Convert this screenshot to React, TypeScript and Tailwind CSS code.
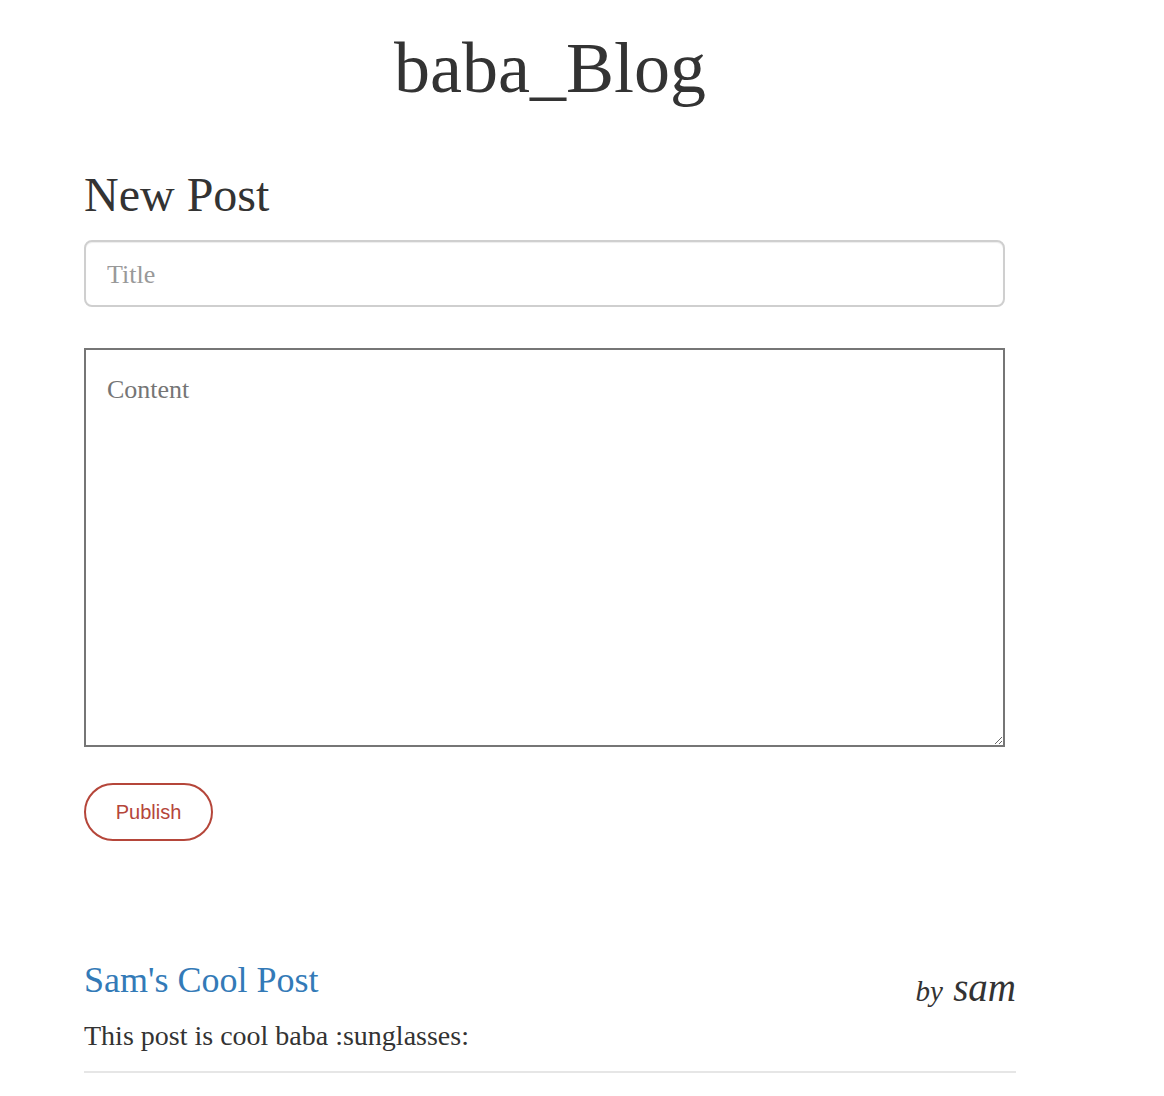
import React from 'react';

const posts = [
  { title: "Sam's Cool Post", author: 'sam', content: 'This post is cool baba :sunglasses:' },
];

export default function App() {
  return (
    <div className="min-h-screen bg-white text-[#333] font-['Liberation_Serif',serif]">
      <div className="ml-[84px] w-[932px] pb-[24px]">
        <h1 className="pt-[32px] text-center text-[72px] leading-none">baba_Blog</h1>

        <h2 className="mt-[67px] text-[48px] leading-none">New Post</h2>

        <form className="mt-[21px] w-[921px]" onSubmit={(e) => e.preventDefault()}>
          <input
            type="text"
            placeholder="Title"
            className="block h-[67px] w-full rounded-[8px] border-2 border-[#cfcfcf] px-[21px] pt-[3px] text-[26px] outline-none placeholder:text-[#999] shadow-[inset_0_1px_1px_rgba(0,0,0,0.075)]"
          />
          <textarea
            placeholder="Content"
            className="mt-[41px] block h-[399px] w-full border-2 border-[#767676] p-[21px] text-[26px] leading-[37px] outline-none placeholder:text-[#757575]"
          />
          <button
            type="submit"
            className="mt-[36px] block h-[58px] w-[129px] rounded-full border-2 border-[#b5463a] bg-white text-[20px] text-[#b5463a] font-['Liberation_Sans',Arial,sans-serif]"
          >
            Publish
          </button>
        </form>

        <div className="mt-[121px]">
          {posts.map((post) => (
            <div key={post.title}>
              <div className="flex items-start justify-between">
                <a href="#" className="text-[36px] leading-none text-[#337ab7]">
                  {post.title}
                </a>
                <div className="mt-[6px] italic leading-none">
                  <span className="mr-[3px] text-[29px]">by </span>
                  <span className="text-[39px]">{post.author}</span>
                </div>
              </div>
              <p className="mt-[15px] text-[28px] leading-none">{post.content}</p>
              <hr className="mt-[21px] border-t-2 border-[#e6e6e6]" />
            </div>
          ))}
        </div>
      </div>
    </div>
  );
}
